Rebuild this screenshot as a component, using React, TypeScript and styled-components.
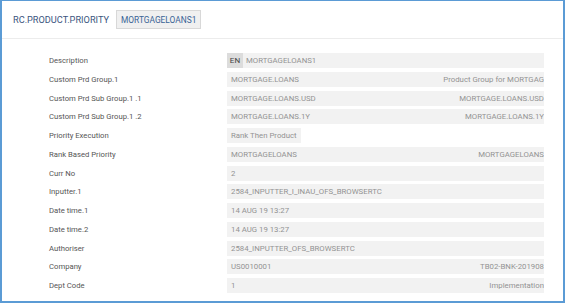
import React from 'react'
import styled, { createGlobalStyle } from 'styled-components'

const GlobalStyle = createGlobalStyle`
  html, body {
    margin: 0;
    padding: 0;
    background: #ffffff;
  }
  body {
    font-family: Roboto, 'Liberation Sans', sans-serif;
  }
`

interface Field {
  label: string
  value: string
  extra?: string
  lang?: string
  compact?: boolean
}

const fields: Field[] = [
  { label: 'Description', value: 'MORTGAGELOANS1', lang: 'EN' },
  { label: 'Custom Prd Group.1', value: 'MORTGAGE.LOANS', extra: 'Product Group for MORTGAG' },
  { label: 'Custom Prd Sub Group.1 .1', value: 'MORTGAGE.LOANS.USD', extra: 'MORTGAGE.LOANS.USD' },
  { label: 'Custom Prd Sub Group.1 .2', value: 'MORTGAGE.LOANS.1Y', extra: 'MORTGAGE.LOANS.1Y' },
  { label: 'Priority Execution', value: 'Rank Then Product', compact: true },
  { label: 'Rank Based Priority', value: 'MORTGAGELOANS', extra: 'MORTGAGELOANS' },
  { label: 'Curr No', value: '2' },
  { label: 'Inputter.1', value: '2584_INPUTTER_I_INAU_OFS_BROWSERTC' },
  { label: 'Date time.1', value: '14 AUG 19 13:27' },
  { label: 'Date time.2', value: '14 AUG 19 13:27' },
  { label: 'Authoriser', value: '2584_INPUTTER_OFS_BROWSERTC' },
  { label: 'Company', value: 'US0010001', extra: 'TB02-BNK-201908' },
  { label: 'Dept Code', value: '1', extra: 'Implementation' }
]

const Frame = styled.div`
  box-sizing: border-box;
  width: 565px;
  height: 303px;
  border: 2px solid #5b9bd5;
  border-top-width: 1px;
  background: #fff;
  display: flex;
  flex-direction: column;
`

const Header = styled.div`
  display: flex;
  align-items: center;
  gap: 7px;
  height: 37px;
  padding-left: 11px;
  border-bottom: 1px solid #ececec;
`

const Title = styled.span`
  font-size: 9.2px;
  color: #3b557e;
`

const Badge = styled.span`
  display: flex;
  align-items: center;
  height: 17px;
  padding: 0 4px;
  background: #f0f0f0;
  border: 1px solid #d8d8d8;
  color: #3a6496;
  font-size: 8.4px;
`

const Body = styled.div`
  display: grid;
  grid-template-columns: 178px 317px;
  row-gap: 3.75px;
  padding: 14px 0 0 47px;
`

const Label = styled.div`
  display: flex;
  align-items: center;
  height: 15px;
  font-size: 7.7px;
  color: #555;
`

const Value = styled.div<{ $compact?: boolean }>`
  display: flex;
  align-items: center;
  justify-content: space-between;
  width: ${({ $compact }) => ($compact ? '74px' : 'auto')};
  height: 15px;
  padding-left: 4px;
  box-sizing: border-box;
  background: #f2f2f2;
  overflow: hidden;
  white-space: nowrap;
  font-size: 7.8px;
  color: #939393;
`

const Lang = styled.span`
  display: flex;
  align-items: center;
  justify-content: center;
  width: 16px;
  height: 15px;
  margin-left: -4px;
  margin-right: 3px;
  background: #dcdcdc;
  color: #444;
  font-size: 8px;
`

const Main = styled.span`
  display: flex;
  align-items: center;
`

const Extra = styled.span`
  color: #939393;
`

export default function App() {
  return (
    <>
      <GlobalStyle />
      <Frame>
        <Header>
          <Title>RC.PRODUCT.PRIORITY</Title>
          <Badge>MORTGAGELOANS1</Badge>
        </Header>
        <Body>
          {fields.map(f => (
            <React.Fragment key={f.label}>
              <Label>{f.label}</Label>
              <div>
                <Value $compact={f.compact}>
                  <Main>
                    {f.lang && <Lang>{f.lang}</Lang>}
                    {f.value}
                  </Main>
                  {f.extra && <Extra>{f.extra}</Extra>}
                </Value>
              </div>
            </React.Fragment>
          ))}
        </Body>
      </Frame>
    </>
  )
}
